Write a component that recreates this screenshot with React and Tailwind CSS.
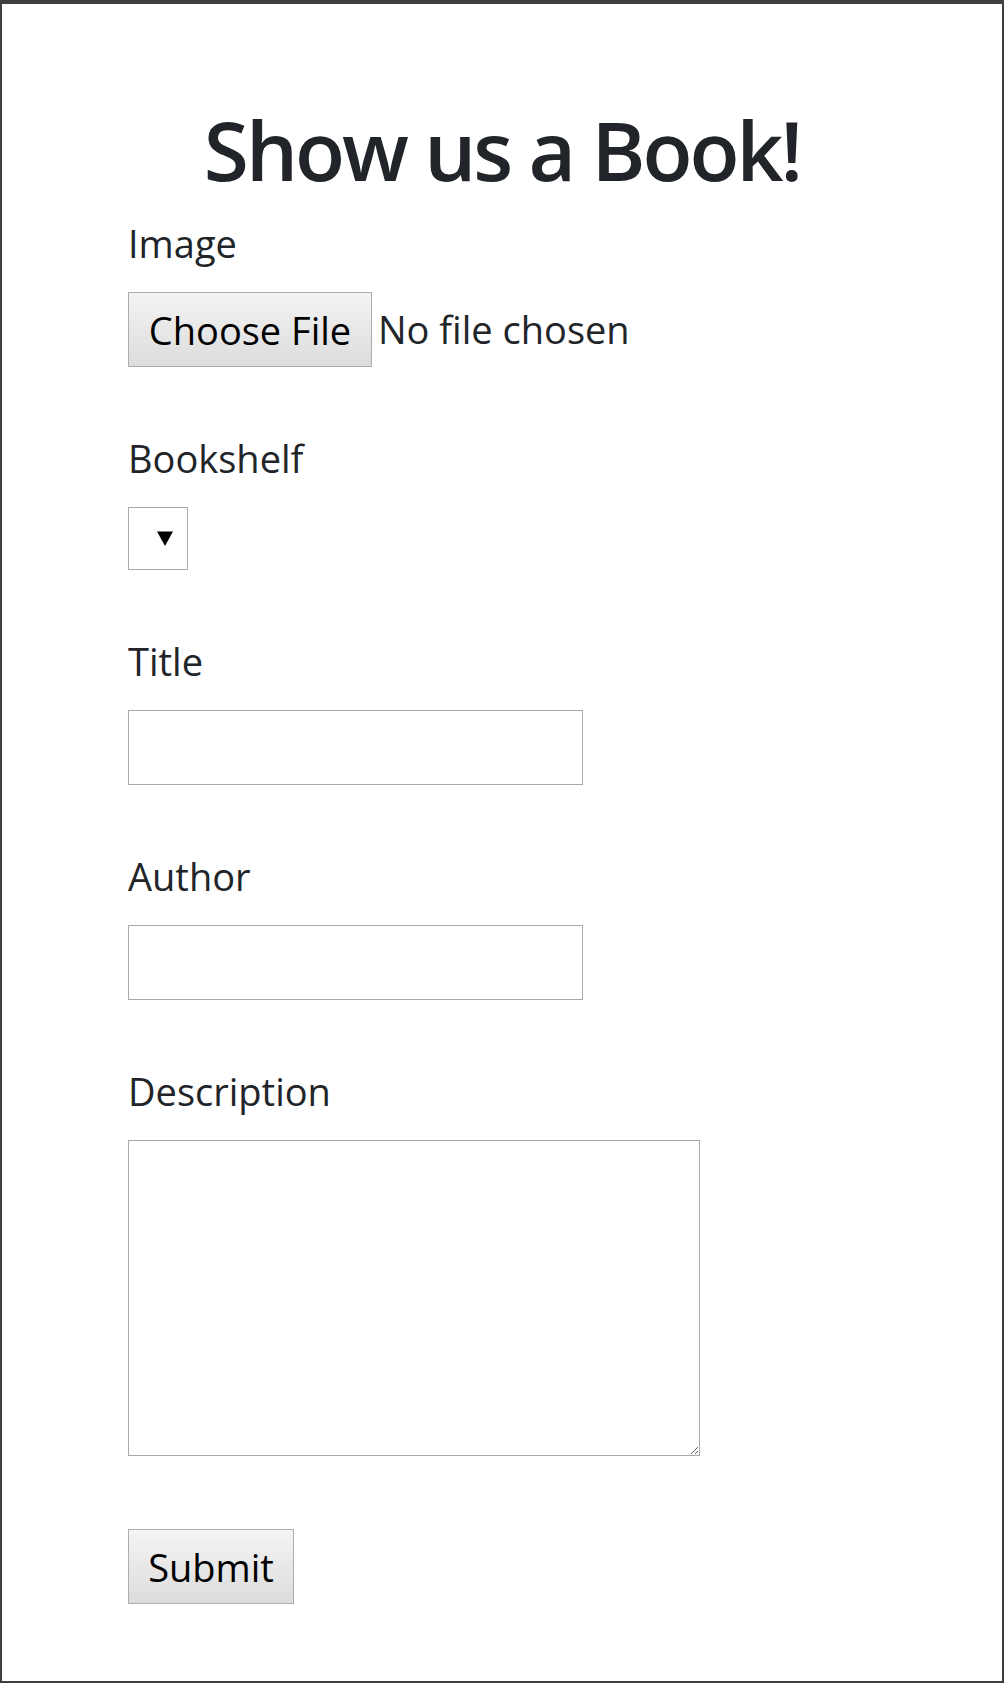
export default function App() {
  const labelCls = "block pt-[2px] text-[38px] leading-[54px] text-[#212529] mb-[22px]";
  const inputCls = "block h-[75px] w-[455px] border border-[#a9a9a9] bg-white px-3 text-[38px] outline-none";
  const btnCls =
    "h-[75px] border border-[#adadad] bg-gradient-to-b from-[#f4f4f4] to-[#dcdcdc] text-[38px] leading-none text-black";

  return (
    <div className="h-[1683px] border-t-4 border-x-2 border-b-2 border-[#3f3f3f] bg-white font-['Open_Sans',sans-serif]">
      <div className="pt-[96px]">
        <h1 className="mb-4 text-center text-[82px] font-semibold leading-[1.2] tracking-[-3px] text-[#212529]">
          Show us a Book!
        </h1>

        <form className="pl-[126px]">
          {/* Image */}
          <div className="mb-[62px]">
            <label className={labelCls}>Image</label>
            <div className="flex items-center">
              <button type="button" className={btnCls + " w-[244px]"}>
                Choose File
              </button>
              <span className="ml-[6px] text-[38px] text-[#212529]">No file chosen</span>
            </div>
          </div>

          {/* Bookshelf */}
          <div className="mb-[62px]">
            <label className={labelCls}>Bookshelf</label>
            <div className="flex h-[63px] w-[60px] items-center border border-[#a9a9a9] bg-white pl-[28px]">
              <svg width="16" height="15" viewBox="0 0 16 15">
                <path d="M0 0.5 L16 0.5 L8 15 Z" fill="#000" />
              </svg>
            </div>
          </div>

          {/* Title */}
          <div className="mb-[62px]">
            <label className={labelCls}>Title</label>
            <input type="text" className={inputCls} />
          </div>

          {/* Author */}
          <div className="mb-[62px]">
            <label className={labelCls}>Author</label>
            <input type="text" className={inputCls} />
          </div>

          {/* Description */}
          <div className="mb-[73px]">
            <label className={labelCls}>Description</label>
            <textarea className="block h-[316px] w-[572px] border border-[#a9a9a9] bg-white p-2 text-[38px] outline-none" />
          </div>

          <button type="submit" className={btnCls + " w-[166px]"}>
            Submit
          </button>
        </form>
      </div>
    </div>
  );
}
